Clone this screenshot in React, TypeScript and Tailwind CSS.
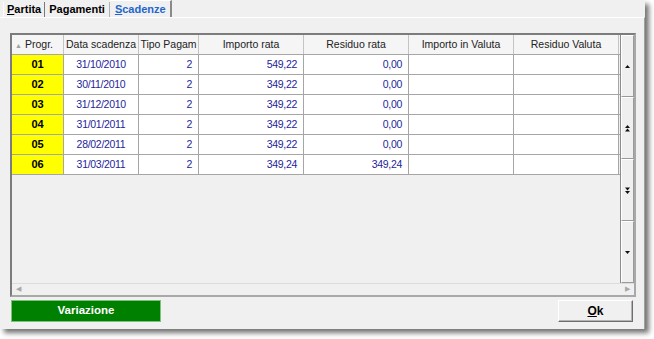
import React from "react";

type Row = {
  progr: string;
  data: string;
  tipo: string;
  importo: string;
  residuo: string;
};

const rows: Row[] = [
  { progr: "01", data: "31/10/2010", tipo: "2", importo: "549,22", residuo: "0,00" },
  { progr: "02", data: "30/11/2010", tipo: "2", importo: "349,22", residuo: "0,00" },
  { progr: "03", data: "31/12/2010", tipo: "2", importo: "349,22", residuo: "0,00" },
  { progr: "04", data: "31/01/2011", tipo: "2", importo: "349,22", residuo: "0,00" },
  { progr: "05", data: "28/02/2011", tipo: "2", importo: "349,22", residuo: "0,00" },
  { progr: "06", data: "31/03/2011", tipo: "2", importo: "349,24", residuo: "349,24" },
];

const headCell = "h-full flex items-center justify-center border-r border-[#c4c4c4] whitespace-nowrap overflow-hidden";
const cell = "h-full flex items-center border-r border-[#a6a6a6] whitespace-nowrap px-[6px]";

const ScrollIcon = ({ kind }: { kind: "up" | "pgup" | "pgdn" | "down" }) => {
  if (kind === "up") {
    return (
      <svg width="5" height="3" viewBox="0 0 5 3">
        <path d="M2.5 0 L5 3 L0 3 Z" fill="#111" />
      </svg>
    );
  }
  if (kind === "down") {
    return (
      <svg width="5" height="3" viewBox="0 0 5 3">
        <path d="M0 0 L5 0 L2.5 3 Z" fill="#111" />
      </svg>
    );
  }
  if (kind === "pgup") {
    return (
      <svg width="5" height="7" viewBox="0 0 5 7">
        <path d="M2.5 0 L5 3 L0 3 Z" fill="#111" />
        <path d="M2.5 3.5 L5 6.5 L0 6.5 Z" fill="#111" />
      </svg>
    );
  }
  return (
    <svg width="5" height="7" viewBox="0 0 5 7">
      <path d="M0 0.5 L5 0.5 L2.5 3.5 Z" fill="#111" />
      <path d="M0 4 L5 4 L2.5 7 Z" fill="#111" />
    </svg>
  );
};

export default function App() {
  return (
    <div className="w-[654px] h-[339px] bg-white font-['Liberation_Sans',Arial,sans-serif] text-[11px] text-black">
      <div className="w-[645px] h-[329px] bg-[#f0f0f0] flex flex-col shadow-[4px_4px_5px_rgba(0,0,0,0.55)]">
        {/* tabs */}
        <div className="h-[17px] flex items-end pl-[3px] text-[11px]">
          <div className="h-[15px] flex items-center px-[3px] border-l border-white border-r border-r-[#7a7a7a] font-bold">
            <span>
              <span className="underline">P</span>artita
            </span>
          </div>
          <div className="h-[15px] flex items-center px-[4px] border-r border-[#b0b0b0] font-bold">
            Pagamenti
          </div>
          <div className="h-[17px] flex items-center pl-[5px] pr-[4px] border-r-2 border-r-[#8a8a8a] border-t border-t-white font-bold text-[#2266cc]">
            <span>
              <span className="underline">S</span>cadenze
            </span>
          </div>
        </div>

        {/* panel */}
        <div className="flex-1 flex flex-col border-t border-white border-r border-r-[#a0a0a0] pt-[15px] pl-[10px]">
          <div className="w-[626px] h-[264px] flex flex-col border-2 border-t-[#7c7c7c] border-l-[#7c7c7c] border-r-[#a8a8a8] border-b-[#a8a8a8]">
            <div className="h-[248px] flex">
              {/* table */}
              <div className="w-[608px] flex flex-col">
                <div className="h-[20px] flex bg-[#f5f5f5] border-b border-[#a6a6a6] text-[#222] text-[10.5px]">
                  <div className={`${headCell} w-[52px] relative`}>
                    <span className="absolute left-[3px] top-[6px] text-[7px] text-[#a0a0a0]">▲</span>
                    <span className="pl-[3px]">Progr.</span>
                  </div>
                  <div className={`${headCell} w-[75px]`}>Data scadenza</div>
                  <div className={`${headCell} w-[60px]`}>Tipo Pagam</div>
                  <div className={`${headCell} w-[105px]`}>Importo rata</div>
                  <div className={`${headCell} w-[105px]`}>Residuo rata</div>
                  <div className={`${headCell} w-[105px]`}>Importo in Valuta</div>
                  <div className={`${headCell} w-[105px]`}>Residuo Valuta</div>
                </div>
                {rows.map((r) => (
                  <div
                    key={r.progr}
                    className="h-[20px] flex border-b border-[#a6a6a6] text-[#24249a] text-[10.5px] tracking-[-0.3px]"
                  >
                    <div className={`${cell} w-[52px] justify-center bg-[#ffff00] font-bold text-black tracking-normal text-[11px]`}>{r.progr}</div>
                    <div className={`${cell} w-[75px] justify-center bg-white`}>{r.data}</div>
                    <div className={`${cell} w-[60px] justify-end bg-white`}>{r.tipo}</div>
                    <div className={`${cell} w-[105px] justify-end bg-white`}>{r.importo}</div>
                    <div className={`${cell} w-[105px] justify-end bg-white`}>{r.residuo}</div>
                    <div className={`${cell} w-[105px] bg-white`}></div>
                    <div className={`${cell} w-[105px] bg-white`}></div>
                  </div>
                ))}
              </div>

              {/* vertical scrollbar */}
              <div className="w-[14px] flex flex-col border-l border-[#8c8c8c]">
                {(["up", "pgup", "pgdn", "down"] as const).map((k) => (
                  <div
                    key={k}
                    className="h-[62px] flex items-center justify-center bg-[#efefef] border border-t-white border-l-white border-r-[#9a9a9a] border-b-[#9a9a9a]"
                  >
                    <ScrollIcon kind={k} />
                  </div>
                ))}
              </div>
            </div>

            {/* horizontal strip */}
            <div className="h-[12px] flex items-center justify-between px-[4px] border-t border-[#dcdcdc] text-[7px] text-[#a8a8a8]">
              <span>◀</span>
              <span>▶</span>
            </div>
          </div>

          {/* buttons */}
          <div className="w-[623px] flex justify-between pl-[1px] mt-[3px]">
            <div className="w-[150px] h-[22px] flex items-center justify-center bg-[#008000] border border-[#7fc07f] text-white font-bold text-[11.5px]">
              Variazione
            </div>
            <div className="w-[75px] h-[22px] flex items-center justify-center bg-[#f0f0f0] border border-t-white border-l-white border-r-[#6e6e6e] border-b-[#6e6e6e] shadow-[inset_-1px_-1px_0_#b4b4b4] font-bold text-[12px]">
              <span>
                <span className="underline">O</span>k
              </span>
            </div>
          </div>
        </div>
      </div>
    </div>
  );
}
